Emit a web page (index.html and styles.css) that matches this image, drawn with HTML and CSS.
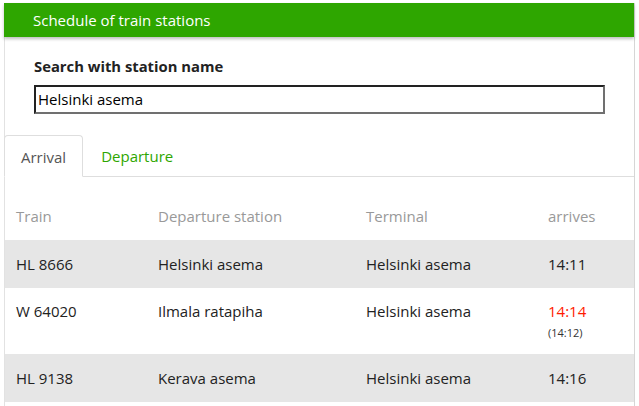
FILE: index.html
```html
<!DOCTYPE html>
<html>
<head>
<meta charset="utf-8">
<link rel="stylesheet" href="styles.css">
</head>
<body>
<div class="card">
  <div class="header">Schedule of train stations</div>
  <div class="search">
    <label class="label">Search with station name</label>
    <div class="input">Helsinki asema</div>
  </div>
  <div class="tabs">
    <div class="tab active">Arrival</div>
    <div class="tab">Departure</div>
  </div>
  <table class="table">
    <thead>
      <tr><th class="c1">Train</th><th class="c2">Departure station</th><th class="c3">Terminal</th><th class="c4">arrives</th></tr>
    </thead>
    <tbody>
      <tr class="odd"><td>HL 8666</td><td>Helsinki asema</td><td>Helsinki asema</td><td>14:11</td></tr>
      <tr class="tall"><td>W 64020</td><td>Ilmala ratapiha</td><td>Helsinki asema</td><td><span class="late">14:14</span><span class="sched">(14:12)</span></td></tr>
      <tr class="odd"><td>HL 9138</td><td>Kerava asema</td><td>Helsinki asema</td><td>14:16</td></tr>
    </tbody>
  </table>
</div>
</body>
</html>
```
FILE: styles.css
```css
html, body { margin: 0; padding: 0; background: #fff; }
body { font-family: "Open Sans", sans-serif; color: #222; font-size: 15px; }
.card {
  margin: 3px 4px 0 4px;
  border-left: 1px solid #e2e2e2;
  border-right: 1px solid #d6d6d6;
  min-height: 403px;
  box-sizing: border-box;
}
.header {
  background: #2ea600;
  color: #fff;
  height: 34px;
  line-height: 34px;
  padding-left: 29px;
  font-size: 15px;
  box-shadow: 0 2px 3px rgba(0,0,0,0.25);
  margin-left: -1px;
}
.search { padding: 19px 29px 0 29px; }
.label { display: block; font-weight: bold; font-size: 14.8px; line-height: 20px; color: #222; }
.input {
  margin-top: 9px;
  width: 571px;
  height: 29px;
  box-sizing: border-box;
  border: 2px solid;
  border-color: #222 #707070 #707070 #222;
  padding-left: 2px;
  line-height: 25px;
  font-size: 15px;
  color: #000;
}
.tabs {
  margin-top: 21px;
  display: flex;
  border-bottom: 1px solid #dedede;
  height: 41px;
}
.tab {
  padding: 0 16px 0 18px;
  line-height: 42px;
  color: #2ea600;
}
.tab.active {
  padding: 0 16px;
  color: #555;
  border: 1px solid #dedede;
  border-bottom: 1px solid #fff;
  border-radius: 4px 4px 0 0;
  margin-left: -1px;
  margin-bottom: -1px;
  height: 42px;
  box-sizing: border-box;
}
.table { width: 100%; border-collapse: collapse; margin-top: 24px; table-layout: fixed; }
th { text-align: left; font-weight: normal; color: #999; height: 39px; padding: 5px 0 0 0; vertical-align: top; box-sizing: border-box; }
td { height: 48px; padding: 0; vertical-align: middle; }
.c1 { width: 153px; }
.c2 { width: 208px; }
.c3 { width: 182px; }
th:first-child, td:first-child { padding-left: 11px; }
tr.odd td { background: #e6e6e6; }
tr.tall td { height: 66px; vertical-align: top; padding-top: 13px; box-sizing: border-box; }
.late { color: #ff1a00; display: block; }
.sched { display: block; font-size: 11px; color: #333; margin-top: 4px; }
```
